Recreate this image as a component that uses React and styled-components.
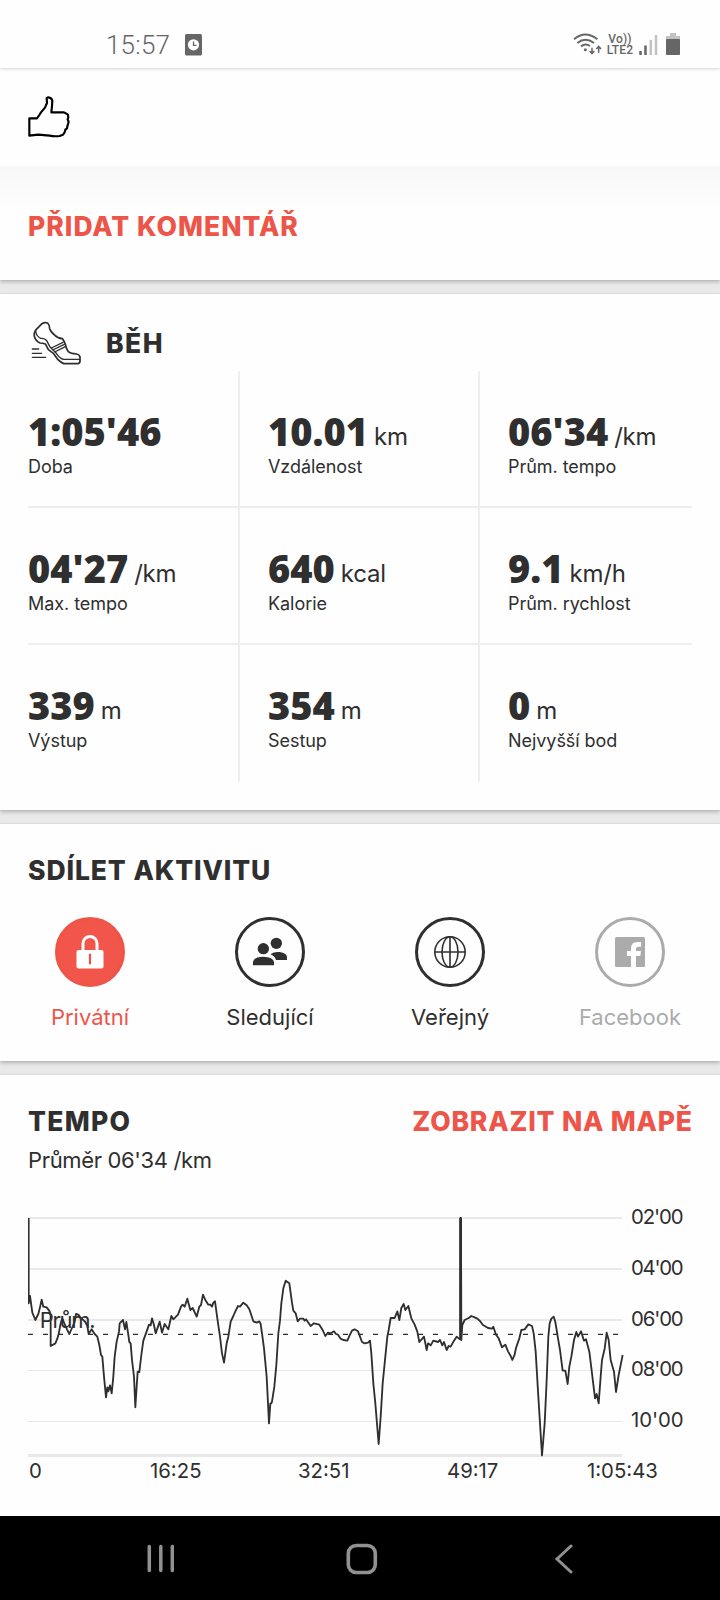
import React from 'react';
import styled, { createGlobalStyle } from 'styled-components';

const GlobalStyle = createGlobalStyle`
  * {
    box-sizing: border-box;
  }

  body {
    margin: 0;
    background: #e9e9e9;
    color: #2f2f2f;
    font-family: Inter, "Liberation Sans", sans-serif;
  }

  svg {
    display: block;
    flex: none;
  }
`;

const Screen = styled.main`
  width: 720px;
  height: 1600px;
  display: flex;
  flex-direction: column;
  overflow: hidden;
`;

const StatusBar = styled.header`
  height: 68px;
  flex: none;
  padding: 22px 40px 0 106px;
  display: flex;
  align-items: center;
  background: #fefefe;
  color: #666666;
  position: relative;
  box-shadow: 0 1px 3px rgba(0, 0, 0, 0.18);
`;

const Clock = styled.span`
  font: 350 26px/30px Roboto, sans-serif;
  letter-spacing: 0.2px;
  width: 79px;
`;

const StatusIcons = styled.div`
  display: flex;
  margin-left: auto;
  align-items: center;
`;

const Network = styled.div`
  width: 28px;
  margin: 0 4px 0 5px;
  font: 500 12px/11.5px Roboto, sans-serif;
  letter-spacing: 0.2px;
  text-align: center;
  white-space: nowrap;
`;

const Card = styled.section`
  height: ${(p) => p.$height}px;
  margin-bottom: ${(p) => (p.$last ? 0 : 14)}px;
  flex: none;
  background: #fefefe;
  box-shadow: 0 0 1px rgba(0, 0, 0, 0.18), 0 2px 4px rgba(0, 0, 0, 0.22);
`;

const LikeRow = styled.div`
  height: 98px;
  padding: 26px 28px;
`;

const CommentRow = styled.div`
  height: 114px;
  padding: 44px 28px 0;
  background: linear-gradient(#f7f7f7, #fefefe 44px);
`;

const Title = styled.h2`
  margin: 0;
  font-size: 26.5px;
  line-height: 32px;
  font-weight: 800;
  letter-spacing: ${(p) => p.$spacing || 0.9}px;
  margin-right: ${(p) => -(p.$spacing || 0.9)}px;
  color: ${(p) => (p.$accent ? '#ee5549' : '#2f2f2f')};
  white-space: nowrap;
`;

const RunHeader = styled.div`
  height: 77px;
  padding: 20px 28px 0;
  display: flex;
  align-items: center;
  gap: 24px;
`;

const Stats = styled.div`
  margin: 0 28px;
  display: grid;
  grid-template-columns: 212px 240px 212px;
  grid-auto-rows: 137px;
`;

const Stat = styled.div`
  padding: 40px 0 0 ${(p) => (p.$first ? 0 : 28)}px;
  border-right: ${(p) => (p.$end ? 0 : 2)}px solid #eeeeee;
  border-bottom: ${(p) => (p.$bottom ? 0 : 2)}px solid #eeeeee;
`;

const Value = styled.div`
  height: 44px;
  font-family: "Noto Sans", sans-serif;
  font-size: 38px;
  line-height: 40px;
  font-weight: 900;
  white-space: nowrap;
`;

const Unit = styled.span`
  margin-left: 6px;
  font-family: Inter, sans-serif;
  font-size: 24px;
  line-height: 1;
  font-weight: 400;
  letter-spacing: -0.2px;
  vertical-align: 1px;
`;

const Label = styled.div`
  font-size: 18px;
  line-height: 24px;
  letter-spacing: -0.05px;
`;

const ShareHead = styled.div`
  height: 93px;
  padding: 30px 28px 0;
`;

const ShareOptions = styled.div`
  display: grid;
  grid-template-columns: repeat(4, 180px);
`;

const optionColors = {
  active: '#ee5549',
  normal: '#2f2f2f',
  disabled: '#ababab',
};

const Option = styled.div`
  display: flex;
  flex-direction: column;
  align-items: center;
  gap: 16px;
  font-size: 22px;
  line-height: 28px;
  color: ${(p) => optionColors[p.$state]};
`;

const Circle = styled.div`
  width: 70px;
  height: 70px;
  border: 3px solid currentColor;
  border-radius: 50%;
  display: flex;
  align-items: center;
  justify-content: center;
  background: ${(p) => (p.$filled ? '#f2554a' : 'transparent')};
`;

const PaceHead = styled.div`
  padding: 30px 28px 0;
  display: flex;
  justify-content: space-between;
`;

const Average = styled.div`
  padding: 9px 28px 0;
  font-size: 22px;
  line-height: 28px;
  letter-spacing: -0.35px;
`;

const ChartArea = styled.div`
  margin-top: 24px;
  padding-left: 28px;
  display: flex;
`;

const NavBar = styled.nav`
  height: 84px;
  flex: none;
  background: #000000;
  position: relative;
  display: flex;
  align-items: center;
  justify-content: space-between;
  padding: 2px 147px 0 146px;
`;

const stats = [
  ["1:05'46", '', 'Doba'],
  ['10.01', 'km', 'Vzdálenost'],
  ["06'34", '/km', 'Prům. tempo'],
  ["04'27", '/km', 'Max. tempo'],
  ['640', 'kcal', 'Kalorie'],
  ['9.1', 'km/h', 'Prům. rychlost'],
  ['339', 'm', 'Výstup'],
  ['354', 'm', 'Sestup'],
  ['0', 'm', 'Nejvyšší bod'],
];

const paceLine = `86,84 86,340 90,318 97,368 106,390 115,372 120,352 125,329 130,350 140,352 149,364 152,378 152,468 166,460
172,446 176,432 182,400 187,385 192,398 201,418 208,432 216,414 224,396 228,372 235,374 241,382 248,388 256,396 262,408
266,432 275,418 284,432 292,440 298,465 303,495 307,500 312,560 318,622 322,592 325,604 330,586 335,610 340,560 344,500
350,455 357,425 359,400 369,390 375,418 379,396 384,428 388,456 392,460 396,510 402,560 406,652 410,590 413,545 418,546
424,495 430,452 440,424 447,404 452,406 456,385 462,405 467,430 474,410 479,395 486,428 494,402 505,418 514,378 520,388
534,374 543,350 548,344 554,350 562,326 571,360 578,354 590,380 598,350 603,345 609,314 616,330 625,344 631,344 636,350
640,338 645,334 652,385 660,440 666,490 672,518 680,460 685,440 692,395 700,378 706,364 714,348 720,350 730,338 740,346
748,358 754,376 760,394 770,398 778,394 782,402 786,430 792,475 800,560 807,700 811,640 814,640 816,635 823,590 829,525
835,430 840,392 844,340 850,295 857,272 868,280 876,338 880,362 887,370 893,394 900,386 910,386 914,392 918,388 932,408
942,400 958,404 968,420 976,438 984,428 992,430 1002,424 1008,432 1014,434 1022,446 1030,450 1042,452 1050,434 1056,422
1064,418 1074,424 1080,440 1086,456 1094,460 1104,458 1110,452 1114,490 1120,580 1126,640 1136,762 1142,680 1148,580
1156,500 1162,440 1166,420 1172,384 1184,384 1192,364 1198,390 1204,354 1211,342 1216,360 1225,348 1234,385 1244,404
1252,425 1258,456 1272,440 1280,480 1284,460 1292,466 1300,452 1314,456 1320,450 1327,466 1332,456 1340,480 1346,468
1352,470 1362,452 1370,440 1377,446 1381,448 1381,84 1383,84 1384,450 1387,405 1394,390 1406,384 1414,378 1424,382
1432,386 1440,393 1448,404 1464,414 1476,416 1480,410 1488,434 1496,445 1506,472 1516,464 1524,484 1532,498 1537,510
1544,494 1548,474 1558,445 1564,420 1574,418 1585,403 1596,408 1601,430 1607,485 1615,620 1626,796 1634,700 1640,570
1645,440 1649,400 1654,386 1661,380 1666,396 1674,445 1680,480 1688,542 1696,542 1703,582 1708,530 1714,500 1722,450
1729,426 1734,440 1743,424 1752,452 1758,448 1768,485 1776,550 1785,625 1790,612 1796,640 1802,560 1806,510 1814,476
1820,428 1826,450 1832,510 1842,545 1848,606 1856,555 1866,505 1868,495`;

const gridLines = [
  [84, "02'00", 101, 6],
  [237, "04'00", 254, 6],
  [390, "06'00", 407, 6],
  [541.5, "08'00", 559, 3],
  [694.5, "10'00", 710, 3],
];

const timeMarks = [
  [87, '0'],
  [450, '16:25'],
  [894, '32:51'],
  [1341, '49:17'],
  [1761, '1:05:43'],
];

const ThumbIcon = () => (
  <svg width="44" height="44" viewBox="84 282 132 132" fill="none" stroke="#000" strokeWidth="6.5" strokeLinejoin="round">
    <path d="M88 355h23l7-10 5-8 12-14 6-14-1-15 5-2q10 1 12 10l-1 16-2 19h38l11 6 2 9-2 6 3 8-3 9-2 10-5 4-2 8-5 7-10 4q-15 2-30-1l-34-3-27 3z" />
  </svg>
);

const ShoeIcon = () => (
  <svg width="54" height="46" viewBox="84 60 162 138" fill="none" stroke="#2f2f2f" strokeWidth="5.2" strokeLinecap="round" strokeLinejoin="round">
    <path d="M143 69q-9-3-17 2l-17 17q-8 10-6 21 4 15 17 20 14 1 17 4l8 16 16 12 13 18q8 8 17 12h43q7-2 6-10v-11q-2-6-10-8-18-1-25-7-6-8-8-19-5-14-10-20-15-2-22-10-13-11-16-20-1-12-6-17z" />
    <path d="M107 93q2 16 15 22 13-1 18 7 6 12 11 20l18 18q10 16 22 18h48M154 144l35-17M158 150l35-17M164 156l32-16" strokeWidth="4" />
    <path d="M97 147h19M97 160h28M97 172h40" strokeWidth="4" />
  </svg>
);

const LockIcon = () => (
  <svg width="28" height="34" viewBox="0 0 28 34">
    <path d="M7 16V8.500a7 7 0 0 1 14 0V16" fill="none" stroke="#fff" strokeWidth="3" />
    <rect x=".5" y="15" width="27" height="18.500" rx="2" fill="#fff" />
    <path d="M14 19.500v9" stroke="#ee5549" strokeWidth="2.200" strokeLinecap="round" />
  </svg>
);

const PeopleIcon = () => (
  <svg width="36" height="36" viewBox="756 462 108 108" fill="currentColor">
    <circle cx="829" cy="490" r="17" />
    <circle cx="790" cy="506" r="17" />
    <path d="M759 556v-10q2-15 31-16 30 1 32 16v10zM811 523q12-9 28-7 21 3 22 15v9h-33q-4-12-17-17z" />
  </svg>
);

const GlobeIcon = () => (
  <svg width="34" height="34" viewBox="0 0 34 34" fill="none" stroke="currentColor" strokeWidth="1.600">
    <circle cx="17" cy="17" r="15.200" />
    <ellipse cx="17" cy="17" rx="8" ry="15.200" />
    <path d="M17 2v30M2 17h30" />
  </svg>
);

const FacebookIcon = () => (
  <svg width="30" height="30" viewBox="0 0 30 30">
    <rect width="30" height="30" rx="1.500" fill="currentColor" />
    <path d="M16 30V19h-4v-5h4v-3q0-6 6.500-6H26v4.700h-2.500q-2.500 0-2.500 2.300v2h5l-.7 5H21v11z" fill="#fefefe" />
  </svg>
);

const shareOptions = [
  ['Privátní', 'active', LockIcon],
  ['Sledující', 'normal', PeopleIcon],
  ['Veřejný', 'normal', GlobeIcon],
  ['Facebook', 'disabled', FacebookIcon],
];

// The chart draws three units per pixel
const PaceChart = () => (
  <svg width="680" height="298" viewBox="84 24 2040 894" fontSize="61" fill="#2f2f2f">
    {gridLines.map(([y, label, baseline, width]) => (
      <g key={label}>
        <path d={`M84 ${y}H1866`} stroke="#e9e9e9" strokeWidth={width} />
        <text x="1893" y={baseline} textLength="158">{label}</text>
      </g>
    ))}
    <path d="M84 796.500H1866" stroke="#e9e9e9" strokeWidth="9" />
    <path d="M84 433H1866" stroke="#2f2f2f" strokeWidth="4" strokeDasharray="15 30" />
    <polyline points={paceLine} fill="none" stroke="#2f2f2f" strokeWidth="5.5" strokeLinejoin="round" />
    <path d="M1382 84V447" stroke="#2f2f2f" strokeWidth="8" />
    <text x="119" y="414" fontSize="66" textLength="168">Prům.</text>
    {timeMarks.map(([x, label]) => (
      <text key={label} x={x} y="863">{label}</text>
    ))}
  </svg>
);

const App = () => (
  <>
    <GlobalStyle />
    <Screen>
      <StatusBar>
        <Clock>15:57</Clock>
        <svg width="17" height="22" viewBox="0 0 17 22">
          <rect width="17" height="21.500" rx="1.500" fill="#666" />
          <circle cx="8.500" cy="10.800" r="5.600" fill="#fff" />
          <path d="M8.500 7.500v3.800h3" fill="none" stroke="#666" strokeWidth="1.300" />
        </svg>
        <StatusIcons>
          <svg width="29" height="24" viewBox="637 97 87 72" fill="none" stroke="#666" strokeWidth="6" overflow="visible">
            <path d="M643 116q34-29 70 0M653 127q24-19 50 0M664 137q13-10 27-1" />
            <circle cx="677" cy="147" r="4.500" fill="#666" stroke="none" />
            <path d="M697 141v17m-7-7 7 8 7-8M717 156v-18m-7 7 7-8 7 8" strokeWidth="4.500" />
          </svg>
          <Network>
            <div>Vo))</div>
            <div>LTE2</div>
          </Network>
          <svg width="20" height="22" viewBox="0 0 20 22">
            <path d="M2.500 17v4M7.500 11.500V21" stroke="#666" strokeWidth="2.500" />
            <path d="M12.800 6v15M18 1v20" stroke="#c2c2c2" strokeWidth="2.500" />
          </svg>
          <svg width="22" height="24" viewBox="0 0 22 24">
            <path d="M12 0h6v3h4v4H8V3h4z" fill="#c2c2c2" />
            <rect x="8" y="6" width="14" height="16" rx="1" fill="#666" />
          </svg>
        </StatusIcons>
      </StatusBar>
      <Card $height={212}>
        <LikeRow>
          <ThumbIcon />
        </LikeRow>
        <CommentRow>
          <Title $accent $spacing={1}>PŘIDAT KOMENTÁŘ</Title>
        </CommentRow>
      </Card>
      <Card $height={516}>
        <RunHeader>
          <ShoeIcon />
          <Title $spacing={1.5}>BĚH</Title>
        </RunHeader>
        <Stats>
          {stats.map(([value, unit, label], i) => (
            <Stat key={label} $first={i % 3 === 0} $end={i % 3 === 2} $bottom={i > 5}>
              <Value>
                {value}
                {unit && <Unit>{unit}</Unit>}
              </Value>
              <Label>{label}</Label>
            </Stat>
          ))}
        </Stats>
      </Card>
      <Card $height={237}>
        <ShareHead>
          <Title>SDÍLET AKTIVITU</Title>
        </ShareHead>
        <ShareOptions>
          {shareOptions.map(([name, state, Icon]) => (
            <Option key={name} $state={state}>
              <Circle $filled={state === 'active'}>
                <Icon />
              </Circle>
              {name}
            </Option>
          ))}
        </ShareOptions>
      </Card>
      <Card $height={441} $last>
        <PaceHead>
          <Title $spacing={1.3}>TEMPO</Title>
          <Title $accent $spacing={0.8}>ZOBRAZIT NA MAPĚ</Title>
        </PaceHead>
        <Average>Průměr 06'34 /km</Average>
        <ChartArea>
          <PaceChart />
        </ChartArea>
      </Card>
      <NavBar>
        <svg width="28" height="30" viewBox="0 0 28 30" stroke="#919191" strokeWidth="3.500" strokeLinecap="round">
          <path d="M3.300 2.500v24M14.800 2.500v24M26.300 2.500v24" />
        </svg>
        <svg width="32" height="32" viewBox="1.500 0 32 32" fill="none" stroke="#919191" strokeWidth="3.600" overflow="visible">
          <rect x="1.800" y="2.500" width="27" height="27" rx="8" />
        </svg>
        <svg width="20" height="30" viewBox="0 0 20 30" fill="none" stroke="#919191" strokeWidth="3" strokeLinecap="round">
          <path d="M18 2 4 15l14 13" />
        </svg>
      </NavBar>
    </Screen>
  </>
);

export default App;
